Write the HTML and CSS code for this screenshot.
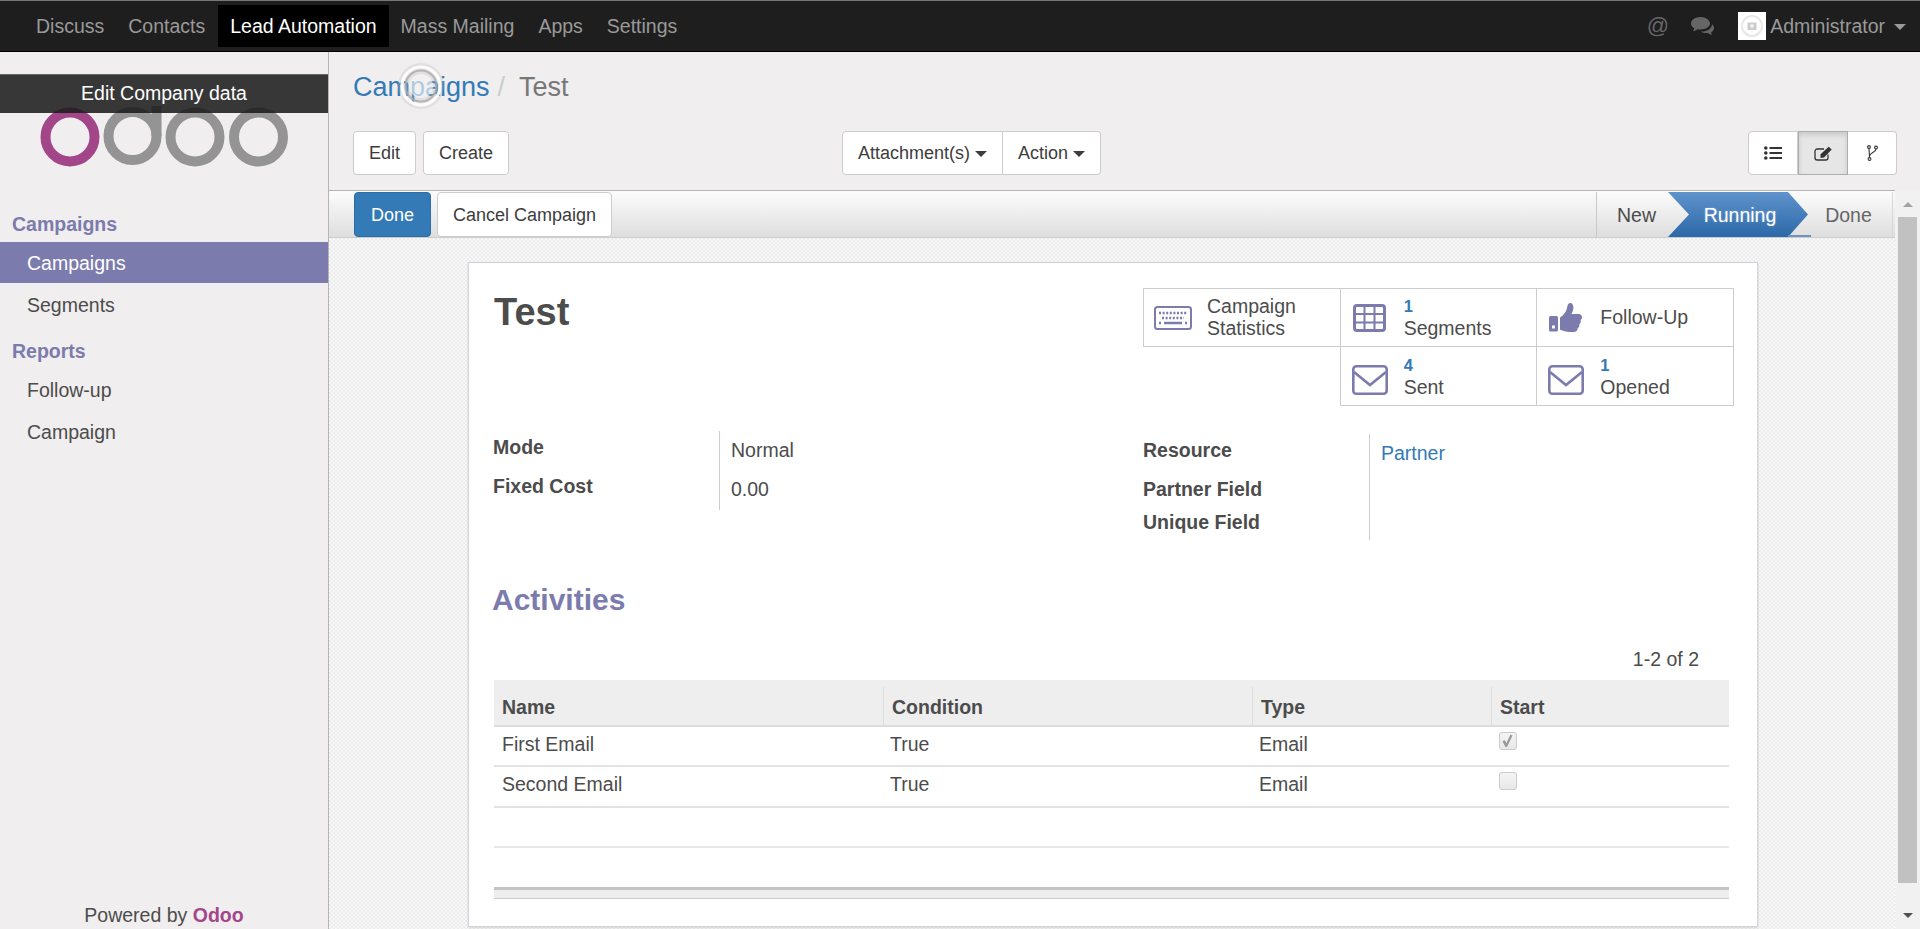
FILE: index.html
```html
<!DOCTYPE html>
<html lang="en">
<head>
<meta charset="utf-8">
<title>Test - Odoo</title>
<link rel="stylesheet" href="styles.css">
</head>
<body>
<header class="navbar">
  <nav class="nav-left">
    <a class="nav-item">Discuss</a>
    <a class="nav-item">Contacts</a>
    <a class="nav-item nav-active">Lead Automation</a>
    <a class="nav-item">Mass Mailing</a>
    <a class="nav-item">Apps</a>
    <a class="nav-item">Settings</a>
  </nav>
  <div class="nav-right">
    <span class="nav-at">@</span>
    <svg class="nav-chat" viewBox="0 0 24 18" width="24" height="18"><path fill="#666" d="M9.500 0C4.300 0 0 2.900 0 6.500c0 2 1.300 3.800 3.400 5-.3 1-.8 1.800-1.500 2.600 1.700-.2 3.300-.9 4.600-1.900 1 .2 2 .3 3 .3 5.200 0 9.500-2.900 9.500-6S14.700 0 9.500 0z"/><path fill="#666" d="M21 7.200c.1 4-4.500 7.300-10.300 7.300h-.9c1.300 1 3.200 1.600 5.200 1.600.7 0 1.400-.1 2.100-.2 1.100.9 2.600 1.600 4.200 1.900-.6-.7-1-1.500-1.300-2.400 1.800-1 3-2.500 3-4.300 0-1.500-.8-2.900-2-3.900z"/></svg>
    <span class="avatar"><svg viewBox="0 0 28 28" width="28" height="28"><circle cx="14" cy="14" r="10" fill="none" stroke="#e8e8e8" stroke-width="2"/><rect x="9.500" y="10.500" width="9" height="7.500" fill="#ccc"/><circle cx="14" cy="14" r="2" fill="#eee"/></svg></span>
    <span class="nav-user">Administrator</span>
    <span class="caret caret-nav"></span>
  </div>
</header>

<div class="app">
  <aside class="sidebar">
    <div class="logo-wrap">
      <svg class="logo" viewBox="0 0 250 62" width="250" height="62">
        <circle cx="30" cy="31" r="24.500" fill="none" stroke="#a24689" stroke-width="10"/>
        <circle cx="92.500" cy="30" r="24" fill="none" stroke="#949494" stroke-width="10"/>
        <rect x="111.500" y="0" width="10" height="30" fill="#949494"/>
        <circle cx="155" cy="31" r="24.500" fill="none" stroke="#949494" stroke-width="10"/>
        <circle cx="218.500" cy="31" r="24.500" fill="none" stroke="#949494" stroke-width="10"/>
      </svg>
    </div>
    <div class="edit-company">Edit Company data</div>
    <div class="menu-head">Campaigns</div>
    <a class="menu-item menu-active">Campaigns</a>
    <a class="menu-item">Segments</a>
    <div class="menu-head menu-head-next">Reports</div>
    <a class="menu-item">Follow-up</a>
    <a class="menu-item">Campaign</a>
    <div class="powered">Powered by <b class="powered-brand">Odoo</b></div>
  </aside>

  <main class="main">
    <div class="control-panel">
      <div class="breadcrumb"><a class="crumb-link">Campaigns</a><span class="crumb-sep">/</span><span class="crumb-current">Test</span></div>
      <div class="toolbar">
        <div class="tool-left">
          <button class="btn">Edit</button>
          <button class="btn">Create</button>
        </div>
        <div class="btn-group">
          <button class="btn btn-joined">Attachment(s) <span class="caret"></span></button>
          <button class="btn btn-joined btn-joined-next">Action <span class="caret"></span></button>
        </div>
        <div class="btn-group view-switch">
          <button class="btn view-btn">
            <svg viewBox="0 0 18 14" width="18" height="14"><g fill="#333"><circle cx="1.800" cy="2" r="1.800"/><circle cx="1.800" cy="7" r="1.800"/><circle cx="1.800" cy="12" r="1.800"/><rect x="5.500" y="1" width="12.500" height="2"/><rect x="5.500" y="6" width="12.500" height="2"/><rect x="5.500" y="11" width="12.500" height="2"/></g></svg>
          </button>
          <button class="btn view-btn view-on">
            <svg viewBox="0 0 19 15" width="19" height="15"><path fill="none" stroke="#333" stroke-width="1.300" d="M14 8.500v3.300a2.200 2.200 0 0 1-2.200 2.200H3.200A2.200 2.200 0 0 1 1 11.800V5.200A2.200 2.200 0 0 1 3.200 3H10"/><path fill="#333" d="M6.500 8.200 14.700.8l3 2.800-7.600 7.800-3.600.6z"/></svg>
          </button>
          <button class="btn view-btn">
            <svg viewBox="0 0 11 16" width="11" height="16"><g fill="none" stroke="#333" stroke-width="1.100"><circle cx="2" cy="2" r="1.400"/><circle cx="9" cy="2.500" r="1.400"/><circle cx="2.500" cy="14" r="1.400"/><path d="M2 3.500l.5 9M9 4c0 3.500-6 3.500-6.500 7"/></g></svg>
          </button>
        </div>
      </div>
    </div>
    <svg class="ripple" viewBox="0 0 50 50" width="50" height="50">
      <circle cx="25" cy="25" r="23" fill="#bbb" fill-opacity=".28"/>
      <circle cx="25" cy="25" r="19" fill="none" stroke="#fff" stroke-opacity=".9" stroke-width="3"/>
      <circle cx="25" cy="25" r="15.500" fill="none" stroke="#aaa" stroke-opacity=".8" stroke-width="2"/>
      <circle cx="25" cy="25" r="12" fill="#fff" fill-opacity=".55"/>
    </svg>

    <div class="work">
      <div class="scroller">
        <div class="statusbar">
          <div class="status-actions">
            <button class="btn btn-primary">Done</button>
            <button class="btn">Cancel Campaign</button>
          </div>
          <div class="stages">
            <span class="stage stage-new">New</span>
            <span class="stage stage-running">Running</span>
            <span class="stage stage-done">Done</span>
          </div>
        </div>
        <div class="sheet-bg">
          <section class="sheet">
            <div class="sheet-head">
              <h1 class="title">Test</h1>
              <div class="stats">
                <div class="stat stat-top">
                  <svg class="stat-icon" viewBox="0 0 38 24" width="38" height="24"><rect x="1" y="1" width="36" height="22" rx="2.500" fill="none" stroke="#7c7bad" stroke-width="2"/><path stroke="#7c7bad" stroke-width="2.500" stroke-dasharray="2 1.600" fill="none" d="M5 7h28M8 12h22"/><path stroke="#7c7bad" stroke-width="2.500" fill="none" d="M5 17h2M10 17h18M31 17h2"/></svg>
                  <span class="stat-text">Campaign<br>Statistics</span>
                </div>
                <div class="stat stat-top">
                  <svg class="stat-icon icon-narrow" viewBox="0 0 33 28" width="33" height="28"><rect x="1.500" y="1.500" width="30" height="25" rx="2.500" fill="none" stroke="#7c7bad" stroke-width="3"/><path stroke="#7c7bad" stroke-width="2" fill="none" d="M1 10h31M1 18.500h31M11.500 2v24M21.500 2v24"/></svg>
                  <span class="stat-text"><b class="stat-num">1</b><br>Segments</span>
                </div>
                <div class="stat stat-top">
                  <svg class="stat-icon icon-narrow" viewBox="0 0 33 30" width="33" height="30"><path fill="#7c7bad" d="M0 14.500a1.500 1.500 0 0 1 1.500-1.500h6A1.500 1.500 0 0 1 9 14.500V27a1.500 1.500 0 0 1-1.500 1.500h-6A1.500 1.500 0 0 1 0 27zM3 22.500v3h3v-3z" fill-rule="evenodd"/><path fill="#7c7bad" d="M11 14.500c3.500-2 6-5.500 7-9.500.4-2 .8-4.500 2.800-5 3.200-.5 3.900 3.500 3.400 6.500-.3 1.700-1 3-1.700 4.500h7c2.300 0 3.500 1.500 3.500 3.200 0 1.300-.6 2.200-1.400 2.800.6 1.700 0 3.300-1.300 4.200.4 1.600-.2 3.100-1.600 3.900.1 2.300-1.600 4-4 4H21c-4 0-7-1.500-10-2.300z"/></svg>
                  <span class="stat-text">Follow-Up</span>
                </div>
                <div class="stat stat-empty"></div>
                <div class="stat">
                  <svg class="stat-icon icon-mail" viewBox="0 0 36 30" width="36" height="30"><rect x="1.300" y="1.300" width="33.400" height="27.400" rx="3" fill="none" stroke="#7c7bad" stroke-width="2.600"/><path fill="none" stroke="#7c7bad" stroke-width="2.600" d="M2 7l16 13L34 7"/></svg>
                  <span class="stat-text"><b class="stat-num">4</b><br>Sent</span>
                </div>
                <div class="stat">
                  <svg class="stat-icon icon-mail" viewBox="0 0 36 30" width="36" height="30"><rect x="1.300" y="1.300" width="33.400" height="27.400" rx="3" fill="none" stroke="#7c7bad" stroke-width="2.600"/><path fill="none" stroke="#7c7bad" stroke-width="2.600" d="M2 7l16 13L34 7"/></svg>
                  <span class="stat-text"><b class="stat-num">1</b><br>Opened</span>
                </div>
              </div>
            </div>

            <div class="groups">
              <div class="group group-left">
                <div class="label">Mode</div><div class="value">Normal</div>
                <div class="label">Fixed Cost</div><div class="value">0.00</div>
              </div>
              <div class="group group-right">
                <div class="label">Resource</div><div class="value"><a class="link">Partner</a></div>
                <div class="label">Partner Field</div><div class="value"></div>
                <div class="label">Unique Field</div><div class="value"></div>
              </div>
            </div>

            <h2 class="section-title">Activities</h2>
            <div class="pager">1-2 of 2</div>
            <table class="grid">
              <colgroup><col class="col-a"><col class="col-b"><col class="col-c"><col class="col-d"></colgroup>
              <thead>
                <tr><th>Name</th><th>Condition</th><th>Type</th><th>Start</th></tr>
              </thead>
              <tbody>
                <tr><td>First Email</td><td>True</td><td>Email</td><td><span class="check"><svg viewBox="0 0 17 18" width="17" height="18"><path fill="#999" d="M3.500 9.500l2-1.500 2 3 4-8.500 2 1L8 15h-1.500z"/></svg></span></td></tr>
                <tr><td>Second Email</td><td>True</td><td>Email</td><td><span class="check"></span></td></tr>
                <tr class="empty"><td></td><td></td><td></td><td></td></tr>
                <tr class="empty"><td></td><td></td><td></td><td></td></tr>
              </tbody>
              <tfoot><tr><td colspan="4"></td></tr></tfoot>
            </table>
          </section>
        </div>
      </div>
      <div class="scrollbar">
        <span class="arrow-up"></span>
        <span class="thumb"></span>
        <span class="arrow-down"></span>
      </div>
    </div>
  </main>
</div>
</body>
</html>
```
FILE: styles.css
```css
* { box-sizing: border-box; }
html, body { height: 100%; }
body {
  margin: 0;
  height: 929px;
  overflow: hidden;
  display: flex;
  flex-direction: column;
  font-family: "Liberation Sans", Arial, sans-serif;
  font-size: 19.5px;
  line-height: 22px;
  color: #4c4c4c;
  background: #f0eeee;
}
a { color: inherit; text-decoration: none; }

/* top bar */
.navbar {
  height: 52px;
  flex: none;
  display: flex;
  align-items: center;
  justify-content: space-between;
  padding-left: 24px;
  background: #1e1e1e;
  border-top: 1px solid #777;
  border-bottom: 1px solid #000;
}
.nav-left { display: flex; align-items: center; }
.nav-item {
  height: 42px;
  display: flex;
  align-items: center;
  padding: 0 12px;
  color: #999;
}
.nav-active { background: #000; color: #fff; margin-left: 1px; }
.nav-right { display: flex; align-items: center; color: #999; padding-right: 14px; }
.nav-at { color: #666; font-size: 22px; }
.nav-chat { margin-left: 22px; }
.avatar {
  width: 28px;
  height: 28px;
  margin-left: 23px;
  background: #fff;
  display: block;
}
.avatar svg { display: block; }
.nav-user { margin-left: 4px; }
.caret {
  display: inline-block;
  width: 0;
  height: 0;
  vertical-align: 2px;
  border-top: 6px solid currentColor;
  border-left: 6px solid transparent;
  border-right: 6px solid transparent;
}
.caret-nav { margin-left: 9px; margin-top: 2px; }

/* layout */
.app { flex: 1; min-height: 0; display: flex; }
.sidebar {
  width: 329px;
  flex: none;
  position: relative;
  display: flex;
  flex-direction: column;
  border-right: 1px solid #b5b5b5;
  background: #f0eeee;
}
.logo-wrap { height: 115px; padding: 54px 0 0 40px; }
.logo { display: block; }
.edit-company {
  position: absolute;
  top: 22px;
  left: 0;
  width: 328px;
  height: 39px;
  line-height: 36px;
  text-align: center;
  color: #fff;
  background: rgba(28, 28, 28, .87);
  border-top: 1px solid #666;
}
.menu-head { margin: 46px 0 7px 12px; font-weight: bold; color: #7c7bad; }
.menu-head-next { margin-top: 14px; }
.menu-item { display: block; height: 42px; line-height: 42px; padding-left: 27px; }
.menu-active { background: #7c7bad; color: #fff; height: 41px; margin-bottom: 1px; }
.powered { margin-top: auto; padding-bottom: 3px; text-align: center; }
.powered-brand { color: #a24689; }

.main { flex: 1; min-width: 0; position: relative; display: flex; flex-direction: column; }
.control-panel { height: 138px; flex: none; padding: 20px 23px 0 24px; }
.breadcrumb { font-size: 27px; line-height: 30px; height: 30px; }
.crumb-link { color: #337ab7; }
.crumb-sep { color: #ccc; padding: 0 9px 0 8px; }
.crumb-current { color: #777; margin-left: 5px; }
.toolbar { display: flex; margin-top: 29px; }
.tool-left { width: 489px; display: flex; gap: 7px; }
.btn {
  font: inherit;
  font-size: 18px;
  color: #3c3c3c;
  height: 44px;
  padding: 0 15px;
  background: #fff;
  border: 1px solid #ccc;
  border-radius: 4px;
}
.btn-group { display: flex; }
.btn-joined { border-radius: 4px 0 0 4px; }
.btn-joined-next { border-left: 0; border-radius: 0 4px 4px 0; }
.view-switch { margin-left: auto; }
.view-btn { width: 50px; padding: 0; border-radius: 0; border-left: 0; display: flex; align-items: center; justify-content: center; }
.view-btn:first-child { border-left: 1px solid #ccc; border-radius: 4px 0 0 4px; }
.view-btn:last-child { width: 49px; border-radius: 0 4px 4px 0; }
.view-on { background: #e6e6e6; border-color: #adadad; border-left: 1px solid #adadad; box-shadow: inset 0 3px 5px rgba(0, 0, 0, .125); }
.ripple { position: absolute; left: 67px; top: 9px; }

/* scroll area */
.work { flex: 1; min-height: 0; display: flex; }
.scroller { flex: 1; min-width: 0; display: flex; flex-direction: column; }
.statusbar {
  height: 48px;
  flex: none;
  display: flex;
  justify-content: space-between;
  padding: 1px 2px 0 25px;
  background: linear-gradient(#fcfcfc, #dedede);
  border-top: 1px solid #b5b5b5;
  border-bottom: 1px solid #ccc;
}
.status-actions { display: flex; gap: 6px; }
.statusbar .btn { font-size: 18px; height: 45px; }
.btn-primary { width: 77px; padding: 0; background: #337ab7; border-color: #2e6da4; color: #fff !important; }
.stages { display: flex; position: relative; height: 45px; font-size: 19.5px; }
.stages::after {
  content: "";
  position: absolute;
  left: 192px;
  bottom: 0;
  width: 23px;
  height: 2px;
  background: #6d93c4;
}
.stage { display: flex; align-items: center; justify-content: center; }
.stage-new { width: 72px; padding-left: 8px; border-left: 1px solid #c8c8c8; }
.stage-running {
  width: 140px;
  padding-left: 4px;
  color: #fff;
  text-shadow: 0 0 2px rgba(255, 255, 255, .35);
  background: linear-gradient(#5f93cc, #2c68a8);
  clip-path: polygon(0 0, 120px 0, 100% 50%, 120px 100%, 0 100%, 21px 50%);
}
.stage-done { width: 85px; padding-right: 3px; color: #666; border-right: 1px solid #d8d8d8; }

.sheet-bg {
  flex: 1;
  min-height: 0;
  padding-top: 24px;
  background-color: #f8f8f8;
  background-image: conic-gradient(#ececec 25%, transparent 0 50%, #ececec 0 75%, transparent 0);
  background-size: 4px 4px;
}
.sheet {
  width: 1290px;
  height: 665px;
  margin-left: 139px;
  padding: 25px 24px 0 24px;
  background: #fff;
  border: 1px solid #d2d2da;
  box-shadow: 0 1px 2px rgba(0, 0, 0, .12);
}
.sheet-head { display: flex; justify-content: space-between; height: 117px; }
.title { margin: 0; font-size: 38px; line-height: 46px; padding: 1px 0 0 1px; color: #4c4c4c; }
.stats {
  width: 590px;
  height: 117px;
  display: grid;
  grid-template-columns: repeat(3, 1fr);
  grid-template-rows: 58px 59px;
}
.stat {
  display: flex;
  align-items: center;
  border: 1px solid #ccc;
  margin: 0 -1px -1px 0;
  padding-left: 10px;
  color: #4c4c4c;
}
.stat-empty { border: 0; }
.stat-icon { flex: none; display: block; }
.stat-text { margin-left: 15px; line-height: 22px; }
.stat-top .stat-text { margin-top: -2px; }
.icon-narrow { margin-left: 2px; }
.icon-narrow + .stat-text { margin-left: 18px; }
.icon-mail { margin: 7px 0 0 1px; }
.icon-mail + .stat-text { margin: -1px 0 0 16px; }
.stat-num { color: #337ab7; font-size: 16.5px; }

.groups { display: flex; margin-top: 26px; height: 109px; }
.group { display: grid; align-content: start; }
.group-left { width: 650px; grid-template-columns: 226px 1fr; grid-template-rows: 39px 40px; }
.group-right { flex: 1; margin-top: 3px; grid-template-columns: 226px 1fr; grid-template-rows: 39px 33px 34px; }
.label { font-weight: bold; padding-top: 5px; }
.value { border-left: 1px solid #ccc; padding: 8px 0 0 11px; }
.link { color: #337ab7; }

.section-title { margin: 43px 0 0 -1px; font-size: 30px; line-height: 34px; color: #7c7bad; }
.pager { margin-top: 31px; padding-right: 34px; text-align: right; }

.grid { margin: 10px 0 0 1px; width: 1235px; table-layout: fixed; border-collapse: collapse; }
.col-a { width: 389px; }
.col-b { width: 369px; }
.col-c { width: 239px; }
.col-d { width: 238px; }
.grid th {
  height: 46px;
  padding: 9px 0 0 8px;
  text-align: left;
  font-weight: bold;
  background: #eee linear-gradient(#ddd, #ddd) no-repeat left bottom / 1px 38px;
  border-bottom: 2px solid #ddd;
}
.grid th + th { padding-left: 9px; }
.grid th:first-child { background: #eee; }
.grid td { height: 40px; padding: 0 0 5px 8px; border-bottom: 2px solid #e2e2e2; }
.grid td + td { padding-left: 7px; }
.grid td:nth-child(4) { padding-left: 8px; }
.grid tbody tr:nth-child(2) td { height: 41px; }
.grid .empty td { border-bottom-color: #e8e8e8; }
.grid tbody tr:last-child td { height: 41px; border-bottom: 3px solid #c4c4c4; }
.grid tfoot td { height: 10px; padding: 0; background: #eee; border-bottom: 1px solid #ccc; }
.check {
  display: block;
  width: 18px;
  height: 18px;
  margin-top: -6px;
  border: 1px solid #ccc;
  border-radius: 3px;
  background: linear-gradient(#f4f4f4, #e8e8e8);
}
.check svg { display: block; margin: -1px; }

/* scrollbar */
.scrollbar { width: 25px; flex: none; display: flex; flex-direction: column; align-items: center; background: #f1f1f1; padding-top: 12px; }
.arrow-up { width: 0; height: 0; border: 5px solid transparent; border-top: 0; border-bottom: 5px solid #a3a3a3; }
.thumb { width: 19px; height: 666px; margin-top: 10px; background: #c1c1c1; }
.arrow-down { width: 0; height: 0; margin-top: 30px; border: 5px solid transparent; border-bottom: 0; border-top: 5px solid #505050; }
```
